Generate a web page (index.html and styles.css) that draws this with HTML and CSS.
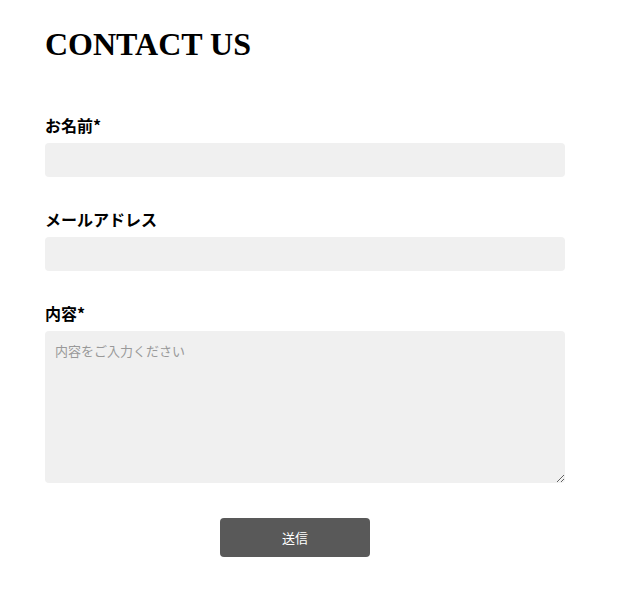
FILE: index.html
```html
<!DOCTYPE html>
<html lang="ja">
<head>
    <meta charset="UTF-8">
    <meta name="viewport" content="width=device-width, initial-scale=1.0">
    <title>Contact Us</title>
    <link rel="stylesheet" href="styles.css">
</head>
<body>
    <div class="container">
        <h1>CONTACT US</h1>

        <form class="contact-form">
            <div class="form-group">
                <label for="name">お名前*</label>
                <input type="text" id="name">
            </div>
            <div class="form-group">
                <label for="email">メールアドレス</label>
                <input type="email" id="email">
            </div>
            <div class="form-group">
                <label for="message">内容*</label>
                <textarea id="message" placeholder="内容をご入力ください"></textarea>
            </div>
            <div class="actions">
                <button type="submit">送信</button>
            </div>
        </form>
    </div>
</body>
</html>
```

FILE: styles.css
```css
body {
    margin: 0;
    background: #fff;
    font-family: "Noto Sans CJK JP", "Noto Sans", sans-serif;
    color: #000;
}

.container {
    width: 520px;
    padding: 26px 0 0 45px;
}

h1 {
    font-family: "Liberation Serif", "Times New Roman", serif;
    font-weight: bold;
    font-size: 32px;
    line-height: 36px;
    margin: 0 0 52px;
    color: #000;
}

.form-group {
    margin-bottom: 31px;
}

label {
    display: block;
    font-size: 16px;
    font-weight: bold;
    line-height: 22px;
    margin-bottom: 7px;
}

input, textarea {
    display: block;
    width: 100%;
    height: 34px;
    padding: 10px;
    border: none;
    border-radius: 4px;
    background: #f0f0f0;
    font-family: inherit;
    font-size: 13px;
    box-sizing: border-box;
}

textarea {
    height: 152px;
    resize: vertical;
}

textarea::placeholder {
    color: #999;
}

.form-group:last-of-type {
    margin-bottom: 35px;
}

.actions {
    padding-top: 4px;
    padding-left: 175px;
}

button {
    width: 150px;
    height: 39px;
    border: none;
    border-radius: 4px;
    background: #595959;
    color: #fff;
    font-family: inherit;
    font-size: 13px;
    cursor: pointer;
}
```
